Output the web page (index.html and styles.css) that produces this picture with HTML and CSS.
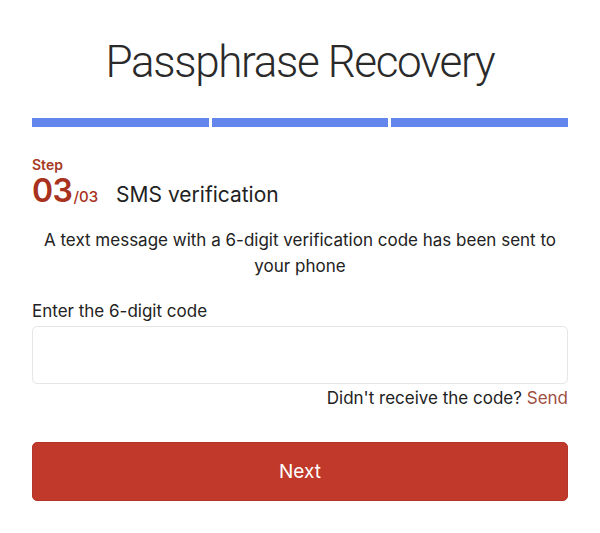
FILE: index.html
```html
<!DOCTYPE html>
<html>
<head>
<meta charset="utf-8">
<link rel="stylesheet" href="styles.css">
</head>
<body>
<main class="page">
  <h1 class="title">Passphrase Recovery</h1>
  <div class="progress">
    <span class="seg"></span><span class="seg"></span><span class="seg"></span>
  </div>
  <div class="step">
    <div class="step-label">Step</div>
    <div class="step-row">
      <span class="step-num">03</span><span class="step-total">/03</span>
      <span class="step-name">SMS verification</span>
    </div>
  </div>
  <p class="info">A text message with a 6-digit verification code has been sent to your phone</p>
  <label class="label" for="code">Enter the 6-digit code</label>
  <input class="input" id="code" type="text">
  <div class="resend">Didn't receive the code? <a class="send" href="#">Send</a></div>
  <button class="btn" type="button">Next</button>
</main>
</body>
</html>
```
FILE: styles.css
```css
* { box-sizing: border-box; }
html, body { margin: 0; background: #fff; }
body { font-family: Inter, "Noto Sans", sans-serif; color: #222; }
.page { padding: 0 32px; display: flex; flex-direction: column; }
.title {
  margin: 36px 0 0;
  text-align: center;
  font-family: Roboto, sans-serif;
  font-weight: 300;
  font-size: 44px;
  letter-spacing: -1.35px;
  line-height: 52px;
  color: #2a2a2a;
}
.progress { display: flex; gap: 3px; margin-top: 30px; }
.seg { flex: 1; height: 9px; background: #6286eb; }
.step { margin-top: 30px; }
.step-label { color: #a63a25; font-weight: 600; font-size: 14px; line-height: 15px; }
.step-row { display: flex; align-items: baseline; margin-top: 4px; }
.step-num { color: #a8321e; font-weight: 600; font-size: 32px; line-height: 30px; letter-spacing: -0.5px; }
.step-total { color: #a8321e; font-weight: 500; font-size: 15px; margin-left: 1px; }
.step-name { font-size: 21px; margin-left: 18px; color: #222; }
.info {
  margin: 20px 0 0;
  text-align: center;
  font-size: 17px;
  line-height: 26px;
  color: #222;
}
.label { margin-top: 22px; font-size: 17px; line-height: 20px; display: block; }
.input {
  margin-top: 5px;
  height: 58px;
  border: 1px solid #e6e6e6;
  border-radius: 5px;
  width: 100%;
  font: inherit;
}
.resend { text-align: right; margin-top: 4px; font-size: 17px; line-height: 20px; }
.send { color: #a0503f; text-decoration: none; }
.btn {
  margin-top: 34px;
  height: 59px;
  width: 100%;
  background: #c0392b;
  color: #fff;
  border: 1px solid #b5342a;
  border-radius: 5px;
  font-family: Inter, sans-serif;
  font-size: 19px;
}
```
